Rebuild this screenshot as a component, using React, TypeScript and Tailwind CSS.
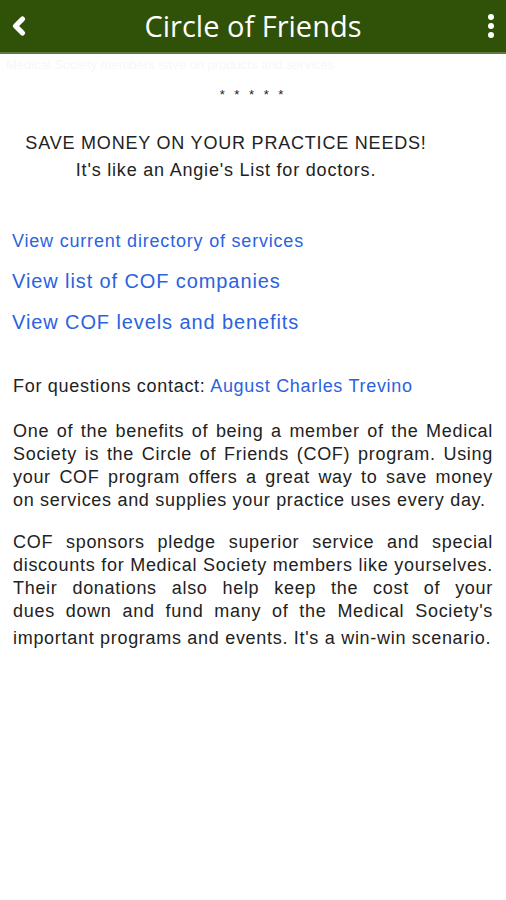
import { ChevronLeft } from "lucide-react";

const App = () => {
  const lines = [
    "COF sponsors pledge superior service and special",
    "discounts for Medical Society members like yourselves.",
    "Their donations also help keep the cost of your",
    "dues down and fund many of the Medical Society's",
  ];

  return (
    <div className="w-[506px] min-h-[900px] bg-white font-['Liberation_Sans',Arial,sans-serif] text-[#222]">
      <div className="h-[54px] bg-[#2f5108] border-b-2 border-[#5d7a3c] grid grid-cols-[40px_1fr_40px] items-center">
        <ChevronLeft className="text-white w-[28px] h-[28px] ml-[5px]" strokeWidth={4.5} />
        <h1 className="font-['Open_Sans',sans-serif] text-white text-[29px] leading-none pb-[1px] text-center">
          Circle of Friends
        </h1>
        <div className="flex flex-col gap-[3px] items-center ml-[9px]">
          <span className="w-[6px] h-[6px] rounded-full bg-white" />
          <span className="w-[6px] h-[6px] rounded-full bg-white" />
          <span className="w-[6px] h-[6px] rounded-full bg-white" />
        </div>
      </div>

      <p className="px-[6px] pt-[4px] text-[13px] leading-[14px] text-[#f7f7f7]">
        Medical Society members save on products and services
      </p>

      <p className="text-center text-[13px] tracking-[3px] mt-[16px] leading-[13px]">* * * * *</p>

      <div className="w-[452px] text-center mt-[29px] tracking-[0.8px]">
        <p className="text-[18px] leading-[27px]">SAVE MONEY ON YOUR PRACTICE NEEDS!</p>
        <p className="text-[18px] leading-[27px]">It's like an Angie's List for doctors.</p>
      </div>

      <div className="px-[12px] mt-[44px] flex flex-col text-[#2b62e0]">
        <a className="text-[18px] leading-[26px] tracking-[0.8px]">View current directory of services</a>
        <a className="text-[20px] leading-[26px] tracking-[0.9px] mt-[14px]">View list of COF companies</a>
        <a className="text-[20px] leading-[26px] tracking-[0.9px] mt-[15px]">View COF levels and benefits</a>
      </div>

      <div className="px-[13px] mt-[40px] text-[18px] leading-[23px] tracking-[0.7px]">
        <p>
          For questions contact: <a className="text-[#2b62e0]">August Charles Trevino</a>
        </p>
        <p className="text-justify mt-[22px]">
          One of the benefits of being a member of the Medical Society is the Circle of Friends (COF)
          program. Using your COF program offers a great way to save money on services and supplies
          your practice uses every day.
        </p>
        <div className="mt-[19px]">
          {lines.map((line) => (
            <span key={line} className="block text-justify [text-align-last:justify]">
              {line}
            </span>
          ))}
          <span className="block mt-[4px]">important programs and events. It's a win-win scenario.</span>
        </div>
      </div>
    </div>
  );
};

export default App;
